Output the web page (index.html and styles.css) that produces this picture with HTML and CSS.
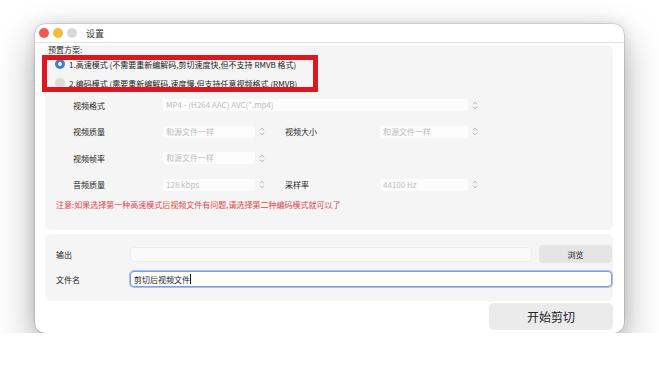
FILE: index.html
```html
<!DOCTYPE html>
<html lang="zh-CN">
<head>
    <meta charset="UTF-8">
    <meta name="viewport" content="width=device-width, initial-scale=1.0">
    <title>设置</title>
    <link rel="stylesheet" href="styles.css">
</head>
<body>
    <div class="window">
        <div class="titlebar">
            <span class="light red"></span>
            <span class="light yellow"></span>
            <span class="light gray"></span>
            <span class="title">设置</span>
        </div>

        <div class="content">
            <section class="group presets">
                <div class="group-title">预置方案:</div>
                <div class="modes">
                    <div class="mode"><span class="radio checked"></span>1.高速模式 (不需要重新编解码,剪切速度快,但不支持 RMVB 格式)</div>
                    <div class="mode"><span class="radio"></span>2.编码模式 (需要重新编解码,速度慢,但支持任意视频格式 (RMVB)</div>
                </div>

                <div class="fields">
                    <span class="label first">视频格式</span>
                    <div class="combo wide">
                        <span class="combo-box">MP4 - (H264 AAC) AVC(*.mp4)</span>
                        <svg class="arrows" width="6" height="9" viewBox="0 0 6 9"><path d="M1 3.2 L3 1.2 L5 3.2 M1 5.8 L3 7.8 L5 5.8"/></svg>
                    </div>

                    <span class="label first">视频质量</span>
                    <div class="combo">
                        <span class="combo-box">和源文件一样</span>
                        <svg class="arrows" width="6" height="9" viewBox="0 0 6 9"><path d="M1 3.2 L3 1.2 L5 3.2 M1 5.8 L3 7.8 L5 5.8"/></svg>
                    </div>
                    <span class="label">视频大小</span>
                    <div class="combo last">
                        <span class="combo-box">和源文件一样</span>
                        <svg class="arrows" width="6" height="9" viewBox="0 0 6 9"><path d="M1 3.2 L3 1.2 L5 3.2 M1 5.8 L3 7.8 L5 5.8"/></svg>
                    </div>

                    <span class="label first">视频帧率</span>
                    <div class="combo">
                        <span class="combo-box">和源文件一样</span>
                        <svg class="arrows" width="6" height="9" viewBox="0 0 6 9"><path d="M1 3.2 L3 1.2 L5 3.2 M1 5.8 L3 7.8 L5 5.8"/></svg>
                    </div>

                    <span class="label first">音频质量</span>
                    <div class="combo">
                        <span class="combo-box">128 kbps</span>
                        <svg class="arrows" width="6" height="9" viewBox="0 0 6 9"><path d="M1 3.2 L3 1.2 L5 3.2 M1 5.8 L3 7.8 L5 5.8"/></svg>
                    </div>
                    <span class="label">采样率</span>
                    <div class="combo last">
                        <span class="combo-box">44100 Hz</span>
                        <svg class="arrows" width="6" height="9" viewBox="0 0 6 9"><path d="M1 3.2 L3 1.2 L5 3.2 M1 5.8 L3 7.8 L5 5.8"/></svg>
                    </div>
                </div>

                <p class="note">注意:如果选择第一种高速模式后视频文件有问题,请选择第二种编码模式就可以了</p>
            </section>

            <section class="group output">
                <div class="out-row">
                    <span class="out-label">输出</span>
                    <div class="text-input"></div>
                    <button class="browse">浏览</button>
                </div>
                <div class="out-row">
                    <span class="out-label">文件名</span>
                    <div class="text-input focused">剪切后视频文件<span class="caret"></span></div>
                </div>
            </section>

            <div class="actions">
                <button class="start">开始剪切</button>
            </div>
        </div>
    </div>
</body>
</html>
```

FILE: styles.css
```css
body {
    margin: 0;
    background-color: #ffffff;
    font-family: "Noto Sans CJK SC", "Noto Sans", sans-serif;
    font-size: 8px;
    color: #222;
}

.window {
    margin: 24px 0 0 35px;
    width: 589px;
    height: 309px;
    background-color: #ffffff;
    border-radius: 10px;
    box-shadow: 0 0 0 0.5px rgba(0, 0, 0, 0.2), 0 0 14px rgba(0, 0, 0, 0.12), 0 16px 40px rgba(0, 0, 0, 0.32);
    display: flex;
    flex-direction: column;
    overflow: hidden;
}

.titlebar {
    height: 18px;
    border-bottom: 1px solid #e4e4e4;
    display: flex;
    align-items: center;
    gap: 4px;
    padding: 0 0 0 4px;
}

.light {
    width: 10px;
    height: 10px;
    border-radius: 50%;
}

.red { background-color: #ee5a52; }
.yellow { background-color: #f2bd3c; }
.gray { background-color: #d9d9d9; }

.title {
    margin-left: 5px;
    font-size: 9px;
    color: #333;
}

.content {
    flex: 1;
    display: flex;
    flex-direction: column;
    padding: 2px 11px 3px 10px;
}

.group {
    background-color: #f5f5f5;
    border-radius: 6px;
}

.presets {
    height: 185px;
}

.group-title {
    height: 10px;
    line-height: 10px;
    padding-left: 3px;
    color: #333;
}

.modes {
    position: relative;
    display: flex;
    flex-direction: column;
    gap: 1px;
}

/* red highlight drawn over the two options */
.modes::after {
    content: "";
    position: absolute;
    left: -3px;
    top: 0;
    width: 276px;
    height: 37px;
    box-sizing: border-box;
    border: 5px solid #e0161f;
}

.mode {
    height: 18px;
    display: flex;
    align-items: center;
    gap: 4px;
    padding-left: 10px;
    color: #222;
}

.radio {
    width: 10px;
    height: 10px;
    border-radius: 50%;
    background-color: #dcdcdc;
}

.radio.checked {
    background: radial-gradient(circle, #ffffff 0 1.8px, #3a7ee0 2.2px);
}

.fields {
    display: grid;
    grid-template-columns: 90px 122px 95px 102px;
    grid-auto-rows: 26.5px;
    align-items: center;
    padding-left: 28px;
}

.label {
    color: #1e1e1e;
}

.label.first {
    grid-column: 1;
}

.combo {
    display: flex;
    align-items: center;
    margin-right: 16px;
}

.combo.wide {
    grid-column: 2 / 5;
    margin-right: 0;
}

.combo.last {
    margin-right: 0;
}

.combo-box {
    flex: 1;
    height: 12px;
    line-height: 12px;
    padding-left: 3px;
    background-color: #fcfcfc;
    border-radius: 2px;
    color: #bcbcbc;
    white-space: nowrap;
    overflow: hidden;
}

.arrows {
    width: 14px;
    flex: none;
}

.arrows path {
    fill: none;
    stroke: #a0a0a0;
    stroke-width: 0.8;
}

.note {
    margin: 1px 0 0 11px;
    line-height: 12px;
    color: #e0474a;
}

.output {
    margin-top: 4px;
    height: 67px;
    box-sizing: border-box;
    padding: 11px 1px 0 11px;
    display: flex;
    flex-direction: column;
    gap: 7px;
}

.out-row {
    height: 18px;
    display: flex;
    align-items: center;
}

.out-label {
    width: 74px;
    flex: none;
}

.text-input {
    flex: 1;
    height: 15px;
    box-sizing: border-box;
    background-color: #fafafa;
    border: 1px solid #ececec;
    border-radius: 4px;
    display: flex;
    align-items: center;
    padding-left: 3px;
    color: #222;
}

.text-input.focused {
    height: 16px;
    background-color: #ffffff;
    border: 1px solid #7d9fd9;
    box-shadow: 0 0 0 1px #a8c0ea;
}

.caret {
    width: 1px;
    height: 10px;
    background-color: #111;
}

.browse {
    width: 73px;
    height: 18px;
    margin-left: 7px;
    border: none;
    border-radius: 4px;
    background-color: #e5e5e5;
    font-family: inherit;
    font-size: 8px;
    color: #222;
    padding: 0;
}

.actions {
    display: flex;
    justify-content: flex-end;
    margin-top: 2px;
}

.start {
    width: 124px;
    height: 27px;
    border: none;
    border-radius: 5px;
    background-color: #ebebeb;
    font-family: inherit;
    font-size: 12px;
    color: #222;
    padding: 0;
}
```
